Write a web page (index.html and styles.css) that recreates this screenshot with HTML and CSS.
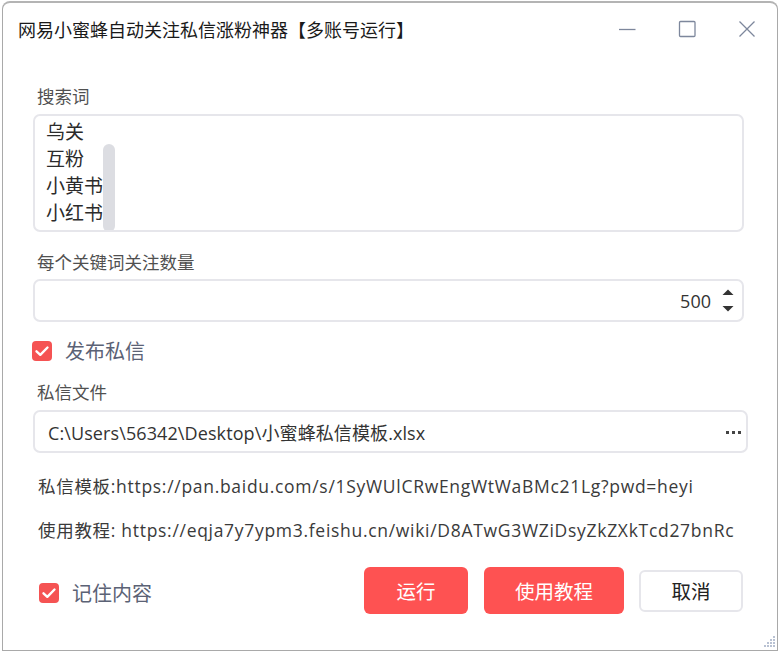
FILE: index.html
```html
<!DOCTYPE html>
<html lang="zh-CN">
<head>
<meta charset="utf-8">
<title>网易小蜜蜂自动关注私信涨粉神器</title>
<link rel="stylesheet" href="styles.css">
</head>
<body>
<div class="desk">
  <div class="window">
    <header class="titlebar">
      <span class="title">网易小蜜蜂自动关注私信涨粉神器【多账号运行】</span>
      <div class="controls">
        <span class="ctl"><svg width="18" height="18" viewBox="0 0 18 18"><path d="M1 9.5H17.5" stroke="#7d879c" stroke-width="1.3" fill="none"/></svg></span>
        <span class="ctl"><svg width="18" height="18" viewBox="0 0 18 18"><rect x="1.5" y="1.5" width="15.5" height="15" rx="1" stroke="#7d879c" stroke-width="1.3" fill="none"/></svg></span>
        <span class="ctl"><svg width="18" height="18" viewBox="0 0 18 18"><path d="M1.5 1.5L16.5 16.5M16.5 1.5L1.5 16.5" stroke="#7d879c" stroke-width="1.3" fill="none"/></svg></span>
      </div>
    </header>
    <main class="content">
      <div class="label l1">搜索词</div>
      <div class="listbox">
        <div class="item">乌关</div>
        <div class="item">互粉</div>
        <div class="item">小黄书</div>
        <div class="item">小红书</div>
        <span class="thumb"></span>
      </div>
      <div class="label l2">每个关键词关注数量</div>
      <div class="input number">
        <span class="num">500</span>
        <span class="spin">
          <svg width="12" height="26" viewBox="0 0 12 26"><path d="M0.5 7L6 1.5L11.5 7Z" fill="#333"/><path d="M0.5 18L6 23.5L11.5 18Z" fill="#333"/></svg>
        </span>
      </div>
      <label class="check c1"><span class="box"><svg width="20" height="20" viewBox="0 0 20 20"><path d="M4.5 10.3L8.3 13.8L15.5 6.5" stroke="#fff" stroke-width="2.4" fill="none" stroke-linecap="round" stroke-linejoin="round"/></svg></span><span class="ctext">发布私信</span></label>
      <div class="label l3">私信文件</div>
      <div class="input file">
        <span class="path">C:\Users\56342\Desktop\小蜜蜂私信模板.xlsx</span>
        <span class="dots"><i></i><i></i><i></i></span>
      </div>
      <div class="link k1">私信模板:https://pan.baidu.com/s/1SyWUlCRwEngWtWaBMc21Lg?pwd=heyi</div>
      <div class="link k2">使用教程: https://eqja7y7ypm3.feishu.cn/wiki/D8ATwG3WZiDsyZkZXkTcd27bnRc</div>
      <footer class="footer">
        <label class="check c2"><span class="box"><svg width="20" height="20" viewBox="0 0 20 20"><path d="M4.5 10.3L8.3 13.8L15.5 6.5" stroke="#fff" stroke-width="2.4" fill="none" stroke-linecap="round" stroke-linejoin="round"/></svg></span><span class="ctext">记住内容</span></label>
        <div class="buttons">
          <button class="btn red run">运行</button>
          <button class="btn red guide">使用教程</button>
          <button class="btn plain">取消</button>
        </div>
      </footer>
    </main>
    <svg class="grip" width="14" height="14" viewBox="0 0 14 14">
      <g fill="#b9c2d3">
        <rect x="11" y="1" width="2" height="2"/>
        <rect x="8" y="4" width="2" height="2"/><rect x="11" y="4" width="2" height="2"/>
        <rect x="5" y="7" width="2" height="2"/><rect x="8" y="7" width="2" height="2"/><rect x="11" y="7" width="2" height="2"/>
        <rect x="2" y="10" width="2" height="2"/><rect x="5" y="10" width="2" height="2"/><rect x="8" y="10" width="2" height="2"/><rect x="11" y="10" width="2" height="2"/>
      </g>
    </svg>
  </div>
</div>
</body>
</html>
```
FILE: styles.css
```css
* { box-sizing: border-box; }
html, body { margin: 0; padding: 0; background: #ffffff; }
body {
  font-family: "Noto Sans CJK SC", "Noto Sans", sans-serif;
  color: #333;
  width: 780px;
  height: 652px;
  overflow: hidden;
}
.desk {
  padding: 1px 2px 0 2px;
}
.window {
  position: relative;
  width: 776px;
  height: 650px;
  background: #fff;
  border: 1px solid #a9a9a9;
  border-top: 2px solid #b4b4b4;
  border-radius: 8px 8px 0 0;
}
.titlebar {
  height: 52px;
  display: flex;
  align-items: center;
  justify-content: space-between;
  padding-left: 15px;
}
.title {
  font-size: 18px;
  line-height: 24px;
  color: #1a1a1a;
}
.controls { display: flex; align-self: stretch; }
.ctl {
  width: 60px;
  display: flex;
  align-items: center;
  justify-content: center;
}
.content {
  padding: 0 33px 0 30px;
}
.label {
  font-size: 17.5px;
  line-height: 24px;
  color: #505050;
  padding-left: 4px;
}
.l1 { margin-top: 29px; }
.l2 { margin-top: 18px; }
.l3 { margin-top: 15px; }
.listbox {
  position: relative;
  margin-top: 6px;
  height: 118px;
  border: 2px solid #e6e6eb;
  border-radius: 7px;
  padding: 1px 0 0 11px;
  overflow: hidden;
}
.item {
  font-size: 19px;
  line-height: 27px;
  color: #2b2b2b;
  width: 60px;
  overflow: hidden;
  white-space: nowrap;
}
.thumb {
  position: absolute;
  left: 68px;
  top: 28px;
  width: 12px;
  height: 88px;
  border-radius: 6px;
  background: #dcdde2;
}
.input {
  margin-top: 5px;
  height: 43px;
  border: 2px solid #e6e6eb;
  border-radius: 7px;
  display: flex;
  align-items: center;
}
.number {
  justify-content: flex-end;
  padding-right: 8px;
}
.num {
  font-family: "Open Sans", "Noto Sans CJK SC", sans-serif;
  font-size: 18px;
  color: #333;
  margin-right: 11px;
}
.spin { display: flex; }
.file {
  margin-top: 6px;
  margin-right: -4px;
  justify-content: space-between;
  padding: 0 5px 0 13px;
}
.path {
  font-family: "Open Sans", "Noto Sans CJK SC", sans-serif;
  font-size: 18px;
  letter-spacing: 0.1px;
  color: #333;
}
.dots { display: flex; gap: 3px; margin-top: 1px; }
.dots i {
  display: block;
  width: 3px;
  height: 3px;
  background: #444;
}
.check {
  display: flex;
  align-items: center;
}
.box {
  width: 20px;
  height: 20px;
  border-radius: 4px;
  background: #f55353;
  display: flex;
}
.ctext {
  font-size: 20px;
  color: #5b6275;
  line-height: 28px;
}
.c1 { margin-top: 15px; margin-left: -1px; }
.c1 .ctext { margin-left: 13px; }
.link {
  font-family: "Open Sans", "Noto Sans CJK SC", sans-serif;
  font-size: 17.5px;
  letter-spacing: 0.7px;
  line-height: 24px;
  color: #3a3a3a;
  padding-left: 5px;
  white-space: nowrap;
}
.k1 { margin-top: 21px; }
.k2 { margin-top: 20px; }
.footer {
  margin-top: 25px;
  display: flex;
  justify-content: space-between;
  align-items: center;
  height: 47px;
}
.c2 { margin-left: 6px; margin-top: 5px; }
.c2 .ctext { margin-left: 13px; }
.buttons {
  display: flex;
  align-items: center;
  margin-right: 1px;
}
.btn {
  font-family: "Noto Sans CJK SC", sans-serif;
  font-size: 19.5px;
  border-radius: 6px;
  padding: 0;
  cursor: pointer;
}
.red {
  background: #fe5252;
  color: #fff;
  border: none;
  height: 47px;
}
.run { width: 104px; }
.guide { width: 140px; margin-left: 16px; }
.plain {
  width: 104px;
  height: 42px;
  margin-left: 15px;
  background: #fff;
  color: #222;
  border: 2px solid #e6e6eb;
}
.grip {
  position: absolute;
  right: 1px;
  bottom: 1px;
}
```
